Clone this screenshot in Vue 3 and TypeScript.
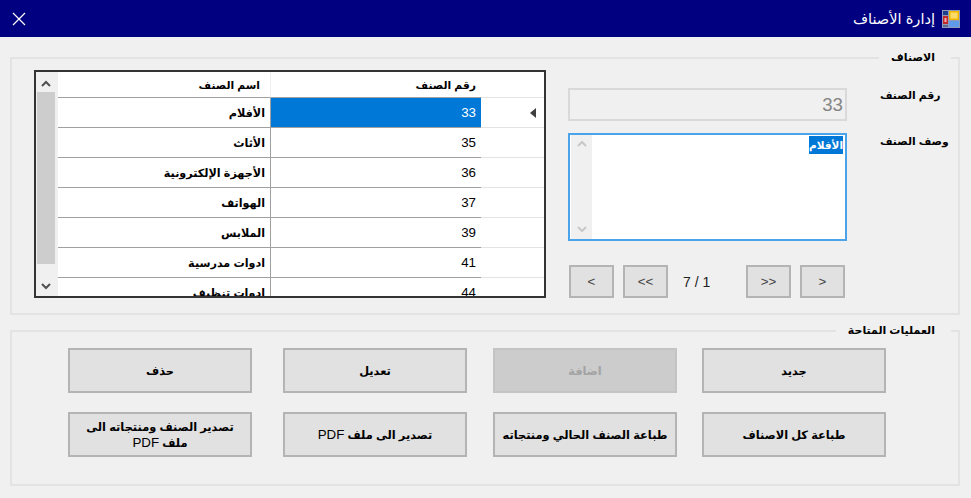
<script setup lang="ts">
import { ref } from "vue";

type Category = { id: number; name: string };
type Action = { label: string; suffix?: string; disabled?: boolean };

const categories: Category[] = [
  { id: 33, name: "الأفلام" },
  { id: 35, name: "الأثاث" },
  { id: 36, name: "الأجهزة الإلكترونية" },
  { id: 37, name: "الهواتف" },
  { id: 39, name: "الملابس" },
  { id: 41, name: "ادوات مدرسية" },
  { id: 44, name: "ادوات تنظيف" },
];

const actions: Action[] = [
  { label: "حذف" },
  { label: "تعديل" },
  { label: "اضافة", disabled: true },
  { label: "جديد" },
  { label: "تصدير الصنف ومنتجاته الى ملف", suffix: "PDF" },
  { label: "تصدير الى ملف", suffix: "PDF" },
  { label: "طباعة الصنف الحالي ومنتجاته" },
  { label: "طباعة كل الاصناف" },
];

const selected = ref(33);
</script>

<template>
  <div class="window">
    <header class="titlebar">
      <svg class="close" width="14" height="14" viewBox="0 0 14 14">
        <path d="M1 1 13 13M13 1 1 13" stroke="#fff" stroke-width="1.2" fill="none" />
      </svg>
      <div class="title">
        <span dir="rtl">إدارة الأصناف</span>
        <svg width="18" height="18" viewBox="0 0 18 18">
          <rect width="18" height="18" fill="#8f9bb8" />
          <rect x="7" y="1" width="10" height="9" fill="#f2b705" />
          <rect x="8.5" y="2.5" width="7" height="6" fill="#fbdc6a" />
          <rect x="1" y="6" width="5" height="8" fill="#c0282c" />
          <rect x="2.5" y="8" width="2" height="4" fill="#f3b0a8" />
          <rect x="1" y="1" width="5" height="4" fill="#1f3f8f" />
          <rect x="7" y="11" width="10" height="6" fill="#5f9be8" />
          <rect x="1" y="15" width="5" height="2" fill="#5a6a90" />
        </svg>
      </div>
    </header>

    <main class="content">
      <section class="group top">
        <span class="legend" dir="rtl">الاصناف</span>

        <div class="grid">
          <div class="scrollbar">
            <svg class="arrow" width="12" height="8" viewBox="0 0 12 8">
              <path d="M2 6 6 2 10 6" stroke="#505050" stroke-width="2" fill="none" />
            </svg>
            <div class="thumb"></div>
            <svg class="arrow" width="12" height="8" viewBox="0 0 12 8">
              <path d="M2 2 6 6 10 2" stroke="#505050" stroke-width="2" fill="none" />
            </svg>
          </div>
          <div class="rows">
            <div class="row head">
              <div class="cell name" dir="rtl">اسم الصنف</div>
              <div class="cell num" dir="rtl">رقم الصنف</div>
              <div class="cell marker"></div>
            </div>
            <div v-for="c in categories" :key="c.id" class="row">
              <div class="cell name" dir="rtl">{{ c.name }}</div>
              <div class="cell num" :class="{ active: c.id === selected }">{{ c.id }}</div>
              <div class="cell marker">
                <span v-if="c.id === selected" class="pointer"></span>
              </div>
            </div>
          </div>
        </div>

        <div class="form">
          <div class="field">
            <div class="textbox">33</div>
            <label dir="rtl">رقم الصنف</label>
          </div>
          <div class="field area-field">
            <div class="textarea">
              <div class="area-scroll">
                <svg width="12" height="8" viewBox="0 0 12 8">
                  <path d="M2 6 6 2 10 6" stroke="#c8c8c8" stroke-width="2" fill="none" />
                </svg>
                <svg width="12" height="8" viewBox="0 0 12 8">
                  <path d="M2 2 6 6 10 2" stroke="#c8c8c8" stroke-width="2" fill="none" />
                </svg>
              </div>
              <span class="selection" dir="rtl">الأفلام</span>
            </div>
            <label dir="rtl">وصف الصنف</label>
          </div>
          <div class="pager">
            <button class="page-btn">&lt;</button>
            <button class="page-btn">&lt;&lt;</button>
            <span class="page-info">7 / 1</span>
            <button class="page-btn">&gt;&gt;</button>
            <button class="page-btn">&gt;</button>
          </div>
        </div>
      </section>

      <section class="group bottom">
        <span class="legend" dir="rtl">العمليات المتاحة</span>
        <div class="actions">
          <button
            v-for="a in actions"
            :key="a.label"
            class="action"
            :disabled="a.disabled"
            dir="rtl"
          >
            {{ a.label }} <span v-if="a.suffix" class="latin">{{ a.suffix }}</span>
          </button>
        </div>
      </section>
    </main>
  </div>
</template>

<style scoped>
.window {
  width: 971px;
  height: 498px;
  background: #f0f0f0;
  overflow: hidden;
  font-family: "Liberation Sans", "DejaVu Sans", sans-serif;
  color: #000;
}
.titlebar {
  height: 37px;
  background: #000080;
  color: #fff;
  display: flex;
  align-items: center;
  justify-content: space-between;
  padding: 0 11px 0 12px;
  box-sizing: border-box;
}
.title {
  display: flex;
  align-items: center;
  gap: 7px;
  font-size: 14.6px;
}
.content {
  padding: 20px 10px 0;
}
.group {
  position: relative;
  border: 2px solid #e3e3e3;
  box-sizing: border-box;
  width: 950px;
}
.legend {
  position: absolute;
  top: -12px;
  right: 7px;
  padding: 0 16px 0 12px;
  background: #f0f0f0;
  font-size: 11px;
  font-weight: bold;
  line-height: 20px;
}
.top {
  height: 258px;
  padding: 11px 0 0 22px;
  display: flex;
  gap: 22px;
}
.bottom {
  height: 156px;
  margin-top: 15px;
  padding: 16px 0 0 56px;
}

/* data grid */
.grid {
  width: 512px;
  height: 228px;
  box-sizing: border-box;
  border: 2px solid #333;
  background: #fff;
  display: flex;
  overflow: hidden;
}
.scrollbar {
  width: 22px;
  flex: none;
  background: #f0f0f0;
  display: flex;
  flex-direction: column;
  align-items: center;
  justify-content: space-between;
  padding: 8px 2px 6px 0;
  box-sizing: border-box;
}
.thumb {
  width: 18px;
  height: 172px;
  background: #cdcdcd;
  margin: 4px 0 auto;
}
.arrow {
  flex: none;
}
.rows {
  flex: 1;
  min-width: 0;
}
.row {
  display: grid;
  grid-template-columns: 213px 210px 1fr;
  height: 30px;
}
.row.head {
  height: 26px;
}
.cell {
  box-sizing: border-box;
  border-bottom: 1px solid #a0a0a0;
  display: flex;
  align-items: center;
  padding: 1px 5px 0;
  font-size: 11.2px;
  font-weight: bold;
  overflow: hidden;
}
.name {
  border-right: 1px solid #a0a0a0;
}
.num {
  justify-content: flex-end;
  padding-top: 0;
  font-size: 13.33px;
  font-weight: normal;
}
.head .cell {
  font-size: 10.8px;
  padding-top: 1px;
}
.head .num {
  font-weight: bold;
  justify-content: flex-start;
}
.head .name {
  padding-right: 10px;
  border-right-color: #f0f0f0;
}
.num.active {
  background: #0078d7;
  color: #fff;
}
.row .marker {
  border-bottom-color: #e3e3e3;
  justify-content: flex-start;
  padding: 0 0 0 49px;
}
.pointer {
  width: 0;
  height: 0;
  border-top: 5.5px solid transparent;
  border-bottom: 5.5px solid transparent;
  border-right: 6px solid #404040;
}

/* form */
.form {
  width: 381px;
  padding-top: 18px;
}
.field {
  display: flex;
  align-items: flex-start;
}
.field label {
  margin-left: 33px;
  font-size: 10.8px;
  font-weight: bold;
  white-space: nowrap;
  line-height: 16px;
  margin-top: -1px;
}
.area-field label {
  margin-top: 0;
}
.textbox {
  width: 279px;
  height: 33px;
  box-sizing: border-box;
  border: 2px solid #d9d9d9;
  color: #858585;
  font-size: 18.67px;
  text-align: right;
  padding: 2px 2px 0 0;
  line-height: 25px;
}
.area-field {
  margin-top: 12px;
}
.textarea {
  width: 279px;
  height: 108px;
  box-sizing: border-box;
  border: 2px solid #4ba3ea;
  background: #fff;
  display: flex;
  justify-content: space-between;
  align-items: flex-start;
}
.area-scroll {
  width: 21px;
  height: 100%;
  background: #f0f0f0;
  margin-left: 1px;
  display: flex;
  flex-direction: column;
  align-items: center;
  justify-content: space-between;
  padding: 5px 0 6px;
  box-sizing: border-box;
}
.selection {
  background: #0078d7;
  color: #fff;
  font-size: 10.5px;
  font-weight: bold;
  line-height: 18px;
  margin: 1px 2px 0 0;
}
.pager {
  display: flex;
  align-items: center;
  margin-top: 24px;
  padding-left: 1px;
}
.page-btn {
  width: 45px;
  height: 33px;
  box-sizing: border-box;
  border: 2px solid #b4b4b4;
  background: #e1e1e1;
  font: 13.33px "Liberation Sans", sans-serif;
  color: #444;
  padding: 0;
}
.page-btn + .page-btn {
  margin-left: 9px;
}
.page-info {
  width: 78px;
  text-align: left;
  padding-left: 15px;
  box-sizing: border-box;
  font-size: 14px;
  color: #222;
}

/* actions */
.actions {
  display: grid;
  grid-template-columns: 215px 210px 209px 184px;
  grid-auto-rows: 45px;
  row-gap: 19px;
}
.action {
  width: 184px;
  box-sizing: border-box;
  border: 2px solid #b4b4b4;
  background: #e1e1e1;
  font: bold 11.4px "Liberation Sans", "DejaVu Sans", sans-serif;
  line-height: 16px;
  color: #000;
  padding: 0 4px;
}
.action .latin {
  font-weight: normal;
  font-size: 13.33px;
  line-height: 1;
}
.action:disabled {
  background: #cccccc;
  border-color: #c4c4c4;
  color: #a3a3a3;
}
</style>

<style>
html,
body {
  margin: 0;
  background: #f0f0f0;
}
</style>
